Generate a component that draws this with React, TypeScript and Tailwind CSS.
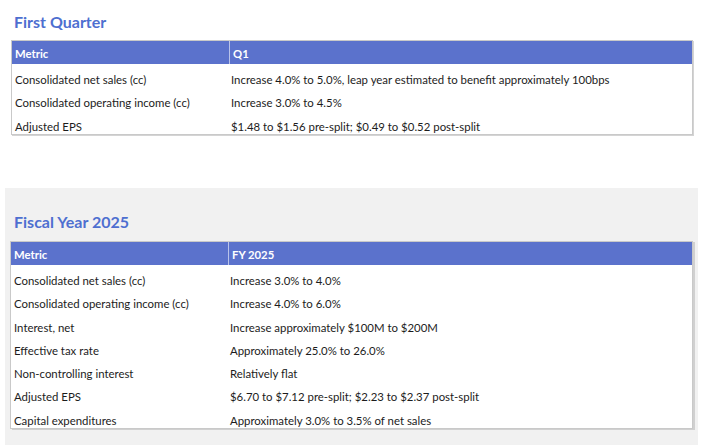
import React from "react";

const q1: [string, string][] = [
  ["Consolidated net sales (cc)", "Increase 4.0% to 5.0%, leap year estimated to benefit approximately 100bps"],
  ["Consolidated operating income (cc)", "Increase 3.0% to 4.5%"],
  ["Adjusted EPS", "$1.48 to $1.56 pre-split; $0.49 to $0.52 post-split"],
];

const fy: [string, string][] = [
  ["Consolidated net sales (cc)", "Increase 3.0% to 4.0%"],
  ["Consolidated operating income (cc)", "Increase 4.0% to 6.0%"],
  ["Interest, net", "Increase approximately $100M to $200M"],
  ["Effective tax rate", "Approximately 25.0% to 26.0%"],
  ["Non-controlling interest", "Relatively flat"],
  ["Adjusted EPS", "$6.70 to $7.12 pre-split; $2.23 to $2.37 post-split"],
  ["Capital expenditures", "Approximately 3.0% to 3.5% of net sales"],
];

function Table({ head, rows, firstW, shadow }: { head: string; rows: [string, string][]; firstW: number; shadow: string }) {
  return (
    <div className={"border border-[#c9c9c9] bg-white " + shadow}>
      <div className="flex h-[23px] bg-[#5b72cc] text-white font-bold text-[11.3px] items-center pt-[4px]">
        <div className="h-full flex items-center pl-[3px] border-r border-[#b9c3ea] -mt-[4px] pt-[4px] box-content" style={{ width: firstW - 1 }}>
          Metric
        </div>
        <div className="pl-[3px]">{head}</div>
      </div>
      {rows.map(([a, b]) => (
        <div key={a} className="flex h-[23.3px] items-center text-[11.4px] text-[#1c1c1c] pt-[8px]">
          <div className="pl-[3px]" style={{ width: firstW }}>
            {a}
          </div>
          <div className="pl-[4px]">{b}</div>
        </div>
      ))}
    </div>
  );
}

export default function App() {
  return (
    <div className="w-[712px] h-[445px] bg-white overflow-hidden" style={{ fontFamily: "Lato, 'Open Sans', sans-serif" }}>
      <div className="pl-[11px] pr-[19px] pt-[12px]">
        <div className="text-[16px] font-bold text-[#4e6fd0] leading-[20px] pl-[3px] mb-[8px]">First Quarter</div>
        <Table head="Q1" rows={q1} firstW={215} shadow="shadow-[1px_1px_0_#d4d4d4]" />
      </div>
      <div className="ml-[5px] mr-[14px] mt-[53px] bg-[#f1f1f1] h-[260px] pt-[24px] pl-[5px] pr-[5px]">
        <div className="text-[16px] font-bold text-[#4e6fd0] leading-[20px] pl-[4px] mb-[9px]">Fiscal Year 2025</div>
        <Table head="FY 2025" rows={fy} firstW={215} shadow="shadow-[2px_1px_0_#d0d0d0]" />
      </div>
    </div>
  );
}
